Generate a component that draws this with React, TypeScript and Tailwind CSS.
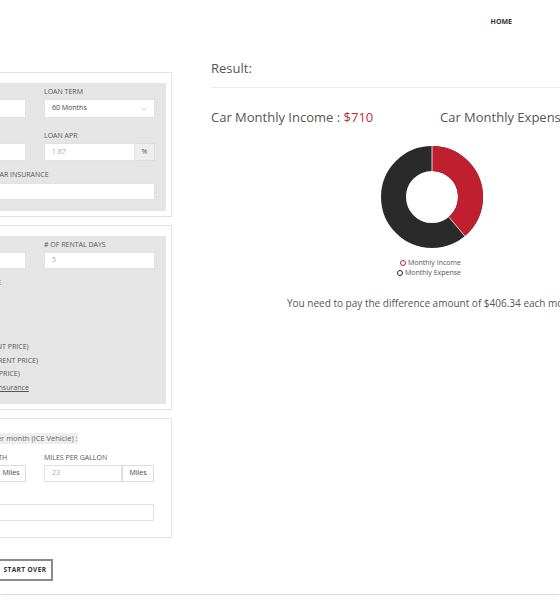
import React from "react";

const label = "text-[7px] leading-[9px] text-[#555] uppercase whitespace-nowrap";
const box = "bg-white border border-[#e2e2e2] text-[7px] flex items-center px-[7px] whitespace-nowrap";
const input = `${box} text-[#aaa]`;

function Donut() {
  const r = 38.5;
  const c = 2 * Math.PI * r;
  const frac = 710 / (710 + 1116.34);
  const a = frac * 2 * Math.PI;
  const ex = 51 + 51 * Math.sin(a);
  const ey = 51 - 51 * Math.cos(a);
  const ix = 51 + 26 * Math.sin(a);
  const iy = 51 - 26 * Math.cos(a);
  return (
    <svg width="102" height="102" viewBox="0 0 102 102">
      <circle cx="51" cy="51" r={r} fill="none" stroke="#2a2a2a" strokeWidth="25" />
      <circle
        cx="51"
        cy="51"
        r={r}
        fill="none"
        stroke="#c01f2f"
        strokeWidth="25"
        strokeDasharray={`${frac * c} ${c}`}
        transform="rotate(-90 51 51)"
      />
      <line x1="51" y1="0" x2="51" y2="26" stroke="#fff" strokeWidth="0.8" />
      <line x1={ix} y1={iy} x2={ex} y2={ey} stroke="#fff" strokeWidth="0.8" />
    </svg>
  );
}

export default function App() {
  return (
    <div className="w-[560px] h-[600px] overflow-hidden bg-white font-['Open_Sans',sans-serif] flex flex-col">
      <div className="h-[58px] flex justify-end pr-[48px] pt-[18px] shrink-0">
        <span className="text-[7px] leading-[8px] font-bold text-[#333]">HOME</span>
      </div>

      <div className="flex shrink-0">
        {/* left column: form */}
        <div className="ml-[-102px] w-[274px] shrink-0 pt-[14px]">
          <div className="border border-[#e3e3e3] px-[5px] pt-[10px] pb-[5px]">
            <div className="bg-[#e5e5e5] px-[11px] pt-[4px] pb-[11px]">
              <div className="grid grid-cols-2 gap-x-[18px]">
                <div>
                  <div className={label}>VEHICLE PRICE</div>
                  <div className={`${input} mt-[3px] h-[19px]`}></div>
                </div>
                <div>
                  <div className={label}>LOAN TERM</div>
                  <div className={`${box} text-[#444] mt-[3px] h-[19px] justify-between`}>
                    <span>60 Months</span>
                    <svg width="6" height="4" viewBox="0 0 6 4">
                      <path d="M0.5 0.8 L3 3.2 L5.5 0.8" fill="none" stroke="#bbb" strokeWidth="0.7" />
                    </svg>
                  </div>
                </div>
                <div className="mt-[13px]">
                  <div className={label}>DOWN PAYMENT</div>
                  <div className={`${input} mt-[3px] h-[18px]`}></div>
                </div>
                <div className="mt-[13px]">
                  <div className={label}>LOAN APR</div>
                  <div className="mt-[3px] h-[18px] flex">
                    <div className={`${input} flex-1`}>1.67</div>
                    <div className="w-[20px] bg-[#eeeeee] border border-[#dcdcdc] border-l-0 text-[7px] text-[#555] flex items-center justify-center">%</div>
                  </div>
                </div>
              </div>
              <div className={`${label} mt-[9px]`}>ESTIMATE OF MONTHLY CAR INSURANCE</div>
              <div className={`${input} mt-[4px] h-[17px]`}></div>
            </div>
          </div>

          <div className="mt-[8px] border border-[#e3e3e3] px-[5px] pt-[10px] pb-[5px]">
            <div className="bg-[#e5e5e5] px-[11px] pt-[4px] pb-[11px] h-[168px]">
              <div className="grid grid-cols-2 gap-x-[18px]">
                <div>
                  <div className={label}>DAILY RENTAL PRICE</div>
                  <div className={`${input} mt-[3px] h-[17px]`}></div>
                </div>
                <div>
                  <div className={label}># OF RENTAL DAYS</div>
                  <div className={`${input} mt-[3px] h-[17px]`}>5</div>
                </div>
              </div>
              <div className={`${label} mt-[9px]`}>CHOOSE INSURANCE TYPE</div>
              <div className="mt-[55px] flex flex-col gap-[4.5px]">
                <div className={label}>BASIC COVER (10% OF RENT PRICE)</div>
                <div className={label}>MEDIUM COVER (15% OF RENT PRICE)</div>
                <div className={label}>FULL COVERAGE (20% OF PRICE)</div>
                <div className="text-[7px] leading-[9px] text-[#555] underline whitespace-nowrap">Learn more about rental insurance</div>
              </div>
            </div>
          </div>

          <div className="mt-[8px] border border-[#e3e3e3] px-[17px] pt-[14px] h-[120px]">
            <div className="flex">
              <span className="ml-[8px] text-[7.5px] leading-[11px] text-[#666] bg-[#eeeeee] whitespace-nowrap">
                Estimated fuel cost per month (ICE Vehicle) :
              </span>
            </div>
            <div className="grid grid-cols-2 gap-x-[18px] mt-[9px]">
              <div>
                <div className={`${label} ml-[3px]`}>MILES DRIVEN PER MONTH</div>
                <div className="mt-[3px] h-[17px] flex">
                  <div className={`${input} flex-1`}></div>
                  <div className="w-[29px] bg-white border border-[#dcdcdc] border-l-0 text-[7px] text-[#444] flex items-center justify-center">Miles</div>
                </div>
              </div>
              <div>
                <div className={label}>MILES PER GALLON</div>
                <div className="mt-[3px] h-[17px] flex">
                  <div className={`${input} flex-1`}>23</div>
                  <div className="w-[32px] bg-white border border-[#dcdcdc] text-[7px] text-[#444] flex items-center justify-center">Miles</div>
                </div>
              </div>
            </div>
            <div className={`${input} mt-[22px] h-[17px]`}></div>
          </div>

          <div className="mt-[21px] ml-[99px] w-[56px] h-[22px] border-2 border-[#8a8a8a] flex items-center justify-center">
            <span className="text-[6.5px] font-bold text-[#333] tracking-[0.4px]">START OVER</span>
          </div>
        </div>

        {/* right column: result */}
        <div className="ml-[39px] w-[480px] shrink-0">
          <div className="text-[13px] leading-[18px] text-[#555] mt-[1px]">Result:</div>
          <div className="h-px bg-[#ececec] mt-[10px]"></div>
          <div className="flex mt-[20px] text-[13px] leading-[18px] text-[#555] whitespace-nowrap">
            <div className="w-[229px]">
              Car Monthly Income : <span className="text-[#b5313a]">$710</span>
            </div>
            <div>
              Car Monthly Expense : <span className="text-[#b5313a]">$1116.34</span>
            </div>
          </div>
          <div className="mt-[20px] ml-[170px]">
            <Donut />
          </div>
          <div className="mt-[10px] ml-[186px] flex flex-col text-[7px] leading-[10px] text-[#555]">
            <div className="flex items-center gap-[2px] ml-[3px]">
              <span className="w-[6px] h-[6px] rounded-full border-[1.3px] border-[#c01f2f]"></span>
              Monthly Income
            </div>
            <div className="flex items-center gap-[2px]">
              <span className="w-[6px] h-[6px] rounded-full border-[1.3px] border-[#2a2a2a]"></span>
              Monthly Expense
            </div>
          </div>
          <div className="mt-[19px] ml-[76px] text-[10px] leading-[12px] text-[#555] whitespace-nowrap">
            You need to pay the difference amount of $406.34 each month.
          </div>
        </div>
      </div>

      <div className="mt-[13px] h-px bg-[#dedede] shadow-[0_2px_4px_rgba(0,0,0,0.1)] shrink-0"></div>
    </div>
  );
}
